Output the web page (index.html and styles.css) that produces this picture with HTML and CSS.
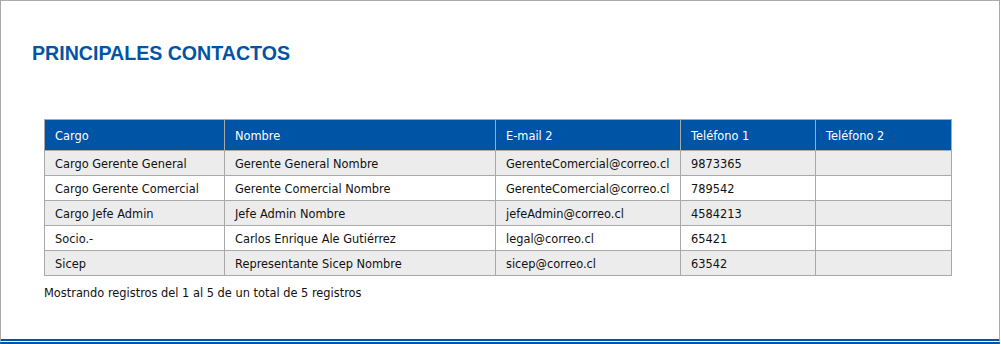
FILE: index.html
```html
<!DOCTYPE html>
<html lang="es">
<head>
<meta charset="utf-8">
<title>Principales contactos</title>
<link rel="stylesheet" href="styles.css">
</head>
<body>
<div class="panel">
  <h2 class="title">PRINCIPALES CONTACTOS</h2>
  <table class="grid">
    <colgroup>
      <col class="c1"><col class="c2"><col class="c3"><col class="c4"><col class="c5">
    </colgroup>
    <thead>
      <tr><th>Cargo</th><th>Nombre</th><th>E-mail 2</th><th>Teléfono 1</th><th>Teléfono 2</th></tr>
    </thead>
    <tbody>
      <tr class="odd"><td>Cargo Gerente General</td><td>Gerente General Nombre</td><td>GerenteComercial@correo.cl</td><td>9873365</td><td></td></tr>
      <tr><td>Cargo Gerente Comercial</td><td>Gerente Comercial Nombre</td><td>GerenteComercial@correo.cl</td><td>789542</td><td></td></tr>
      <tr class="odd"><td>Cargo Jefe Admin</td><td>Jefe Admin Nombre</td><td>jefeAdmin@correo.cl</td><td>4584213</td><td></td></tr>
      <tr><td>Socio.-</td><td>Carlos Enrique Ale Gutiérrez</td><td>legal@correo.cl</td><td>65421</td><td></td></tr>
      <tr class="odd"><td>Sicep</td><td>Representante Sicep Nombre</td><td>sicep@correo.cl</td><td>63542</td><td></td></tr>
    </tbody>
  </table>
  <p class="info">Mostrando registros del 1 al 5 de un total de 5 registros</p>
</div>
</body>
</html>
```

FILE: styles.css
```css
html, body {
  margin: 0;
  padding: 0;
  background: #ffffff;
}
.panel {
  width: 998px;
  height: 338px;
  border: 1px solid #a9a9a9;
  border-bottom: 5px double #0054a6;
  font-family: "DejaVu Sans", Verdana, sans-serif;
  font-size: 11.4px;
  color: #111;
}
.title {
  margin: 0;
  padding: 41px 0 0 31px;
  font-family: "Liberation Sans", Arial, sans-serif;
  font-size: 19.6px;
  line-height: 23px;
  font-weight: bold;
  color: #0054a6;
}
.grid {
  margin: 54px 0 0 43px;
  width: 907px;
  table-layout: fixed;
  border-collapse: collapse;
}
.c1 { width: 180px; }
.c2 { width: 271px; }
.c3 { width: 185px; }
.c4 { width: 135px; }
.c5 { width: 136px; }
.grid th, .grid td {
  border: 1px solid #a9a9a9;
  padding: 2px 0 0 10px;
  text-align: left;
  white-space: nowrap;
  overflow: hidden;
}
.grid th {
  height: 28px;
  background: #0054a6;
  color: #ffffff;
  font-weight: normal;
}
.grid td {
  height: 22px;
}
.grid tr.odd td {
  background: #ececec;
}
.info {
  margin: 11px 0 0 43px;
  line-height: 13px;
}
```
